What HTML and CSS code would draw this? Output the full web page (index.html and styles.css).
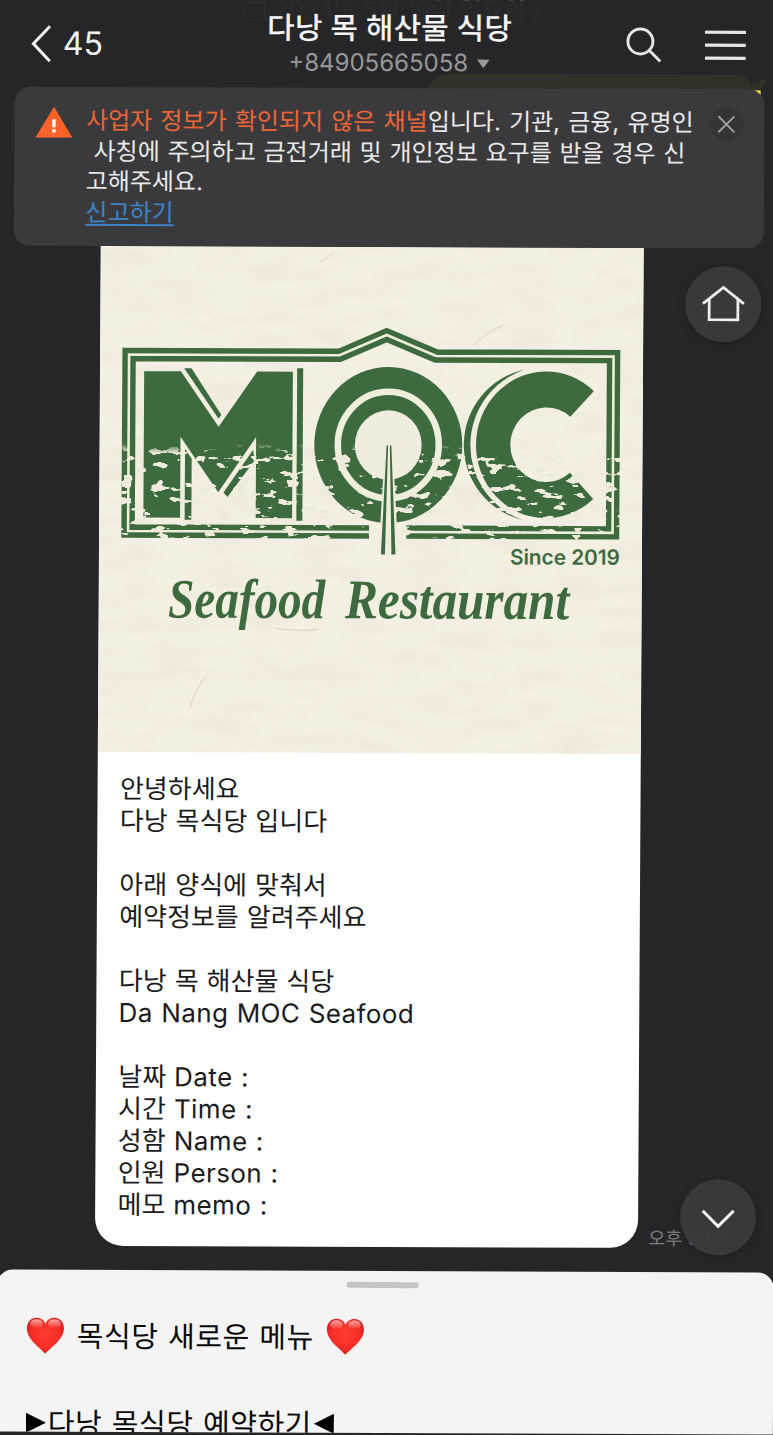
FILE: index.html
```
<!DOCTYPE html>
<html lang="ko">

<head>
    <meta charset="UTF-8">
    <meta name="viewport" content="width=device-width, initial-scale=1.0">
    <title>다낭 목 해산물 식당</title>
    <link rel="stylesheet" href="styles.css">
</head>

<body>
    <div class="screen">
        <!-- content scrolled under the header -->
        <div class="scrolled">
            <div class="date">
                <svg width="22" height="20" viewBox="0 0 22 20" fill="none" stroke="#8e8e90" stroke-width="2">
                    <rect x="1" y="2" width="20" height="17" rx="2" />
                    <path d="M6 0v4M16 0v4M5 10h12M5 14h12" stroke-dasharray="2 2" />
                </svg>
                <span>2024년 5월 19일 일요일 ›</span>
            </div>
            <svg class="sent" width="342" height="60" viewBox="0 0 342 60">
                <path d="M0 60V24Q2 0 28 0H306Q320 1 326 9Q333 8 341 3Q339 11 335 15V24H326V60Z" fill="#fee43c" />
            </svg>
        </div>

        <header class="header">
            <div class="back">
                <svg width="21" height="38" viewBox="0 0 21 38" fill="none" stroke="#f2f2f2" stroke-width="3">
                    <path d="M19 1.5 2.5 19 19 36.5" />
                </svg>
                <span>45</span>
            </div>
            <div class="title">
                <h1>다낭 목 해산물 식당</h1>
                <div class="phone">
                    <span>+84905665058</span>
                    <svg width="13" height="9" viewBox="0 0 13 9"><path d="M0 0h13L6.500 9z" fill="#98989a" /></svg>
                </div>
            </div>
            <div class="tools">
                <svg width="36" height="36" viewBox="0 0 36 36" fill="none" stroke="#e6e6e6" stroke-width="2.900">
                    <circle cx="14.500" cy="14.500" r="12.500" />
                    <path d="M23.500 23.500 34.500 34.500" />
                </svg>
                <svg width="41" height="30" viewBox="0 0 41 30" stroke="#e6e6e6" stroke-width="3.200">
                    <path d="M0 2h41M0 15h41M0 28h41" />
                </svg>
            </div>
        </header>

        <section class="notice">
            <svg class="warn" width="37" height="31" viewBox="0 0 37 31">
                <path d="M18.500 0 37 31H0z" fill="#fd6229" />
                <path d="M16.800 12.500h3.400v8h-3.400zM16.800 22.500h3.400v3.200h-3.400z" fill="#fff" />
            </svg>
            <div class="notice-text">
                <p><em>사업자 정보가 확인되지 않은 채널</em>입니다. 기관, 금융, 유명인</p>
                <p class="tight"> 사칭에 주의하고 금전거래 및 개인정보 요구를 받을 경우 신</p>
                <p>고해주세요.</p>
                <p><a href="#">신고하기</a></p>
            </div>
            <div class="close">
                <svg width="18" height="18" viewBox="0 0 18 18" stroke="#a2a2a4" stroke-width="1.800">
                    <path d="M1 1 17 17M17 1 1 17" />
                </svg>
            </div>
        </section>

        <main class="chat">
            <article class="card">
                <svg class="banner" width="543" height="506" viewBox="98.500 247.500 543 506">
                    <defs>
                        <filter id="paper" x="0" y="0" width="100%" height="100%">
                            <feTurbulence type="fractalNoise" baseFrequency=".02 .06" numOctaves="5" seed="8" />
                            <feColorMatrix values="0 0 0 0 .66  0 0 0 0 .62  0 0 0 0 .54  .4 0 0 0 -.15" />
                        </filter>
                        <filter id="wear" x="0" y="0" width="100%" height="100%" color-interpolation-filters="sRGB">
                            <feTurbulence type="fractalNoise" baseFrequency=".06 .14" numOctaves="5" seed="23" />
                            <feColorMatrix values="0 0 0 0 .938  0 0 0 0 .922  0 0 0 0 .862  26 0 0 0 -16" />
                        </filter>
                        <linearGradient id="fade" x1="0" y1="0" x2="0" y2="1">
                            <stop offset="0" stop-color="#000" />
                            <stop offset=".1" stop-color="#fff" />
                        </linearGradient>
                        <mask id="lower"><rect x="118" y="445" width="503" height="96" fill="url(#fade)" /></mask>
                    </defs>
                    <rect x="98" y="247" width="544" height="507" fill="#f4f0e2" />
                    <rect x="98" y="247" width="544" height="507" filter="url(#paper)" />
                    <g fill="none" stroke="#b9b1a1" stroke-width=".8" opacity=".6">
                        <path d="M502 325Q480 335 472 346M190 710Q196 690 206 678M275 629Q300 633 318 630M318 263l14-10" />
                    </g>

                    <!-- frame -->
                    <g fill="none">
                        <path d="M368.500 532.500H127.500V356H338L385 335.500 434.500 356.300H612V532.500H405.700" stroke="#3d6b3f" stroke-width="13.400" />
                        <path d="M368.500 532.500H127.500V356H338L385 335.500 434.500 356.300H612V532.500H405.700" stroke="#eeefdb" stroke-width="2.600" />
                    </g>

                    <g fill="#3d6b3f">
                        <!-- M -->
                        <path d="M142.700 372.600H179.400L217.400 428 255.700 372.600H291.400V519H255V438L217.400 493.500 179.400 438V519H142.700Z" />
                        <path d="M182.700 369.500H190L220 415.800 217.400 420Z" />
                        <path d="M295.700 369H301.700V521.500H295.700Z" />
                        <path d="M184 450 190.700 460V521H184Z" />
                        <path d="M252 451 254 461 226.700 498 222.700 493.500Z" />
                        <!-- O -->
                        <ellipse cx="387.200" cy="445.500" rx="74" ry="78" />
                    </g>
                    <ellipse cx="387.200" cy="445.500" rx="50.500" ry="53.200" fill="none" stroke="#eef0dc" stroke-width="6.500" />
                    <ellipse cx="387.200" cy="445.500" rx="33.400" ry="34.700" fill="#f0ecde" />
                    <!-- C -->
                    <g fill="#3d6b3f">
                        <path d="M592.400 390.900A70 73.300 0 1 0 592.400 498.600L569 472.600A36 37.300 0 1 1 569 416.600Z" />
                        <path d="M523.400 369.500A77.200 77.200 0 0 0 522 520A79.700 79.700 0 0 1 523.400 369.500Z" />
                    </g>
                    <rect x="118" y="445" width="503" height="96" filter="url(#wear)" mask="url(#lower)" />
                    <!-- chopsticks -->
                    <path d="M384 446H391.500L398 555H378Z" fill="#f0ecde" />
                    <path d="M385.500 446H387L384.500 555H380.500ZM388.800 446H390.300L395 555H391Z" fill="#3d6b3f" />

                    <text class="since" x="509.500" y="564.500" textLength="110" lengthAdjust="spacingAndGlyphs">Since 2019</text>
                    <text class="script" x="168" y="619" textLength="157" lengthAdjust="spacingAndGlyphs">Seafood</text>
                    <text class="script" x="345" y="619" textLength="224" lengthAdjust="spacingAndGlyphs">Restaurant</text>
                </svg>
                <div class="message">
                    <p>안녕하세요</p>
                    <p>다낭 목식당 입니다</p>
                    <br>
                    <p>아래 양식에 맞춰서</p>
                    <p>예약정보를 알려주세요</p>
                    <br>
                    <p>다낭 목 해산물 식당</p>
                    <p class="latin">Da Nang MOC Seafood</p>
                    <br>
                    <p>날짜 <span class="latin">Date :</span></p>
                    <p>시간 <span class="latin">Time :</span></p>
                    <p>성함 <span class="latin">Name :</span></p>
                    <p>인원 <span class="latin">Person :</span></p>
                    <p>메모 <span class="latin">memo :</span></p>
                </div>
            </article>
            <time class="time">오후 5:17</time>
        </main>

        <div class="round home">
            <svg width="44" height="38" viewBox="0 0 44 38" fill="none" stroke="#eee" stroke-width="2.800">
                <path d="M1.500 18.500 22 2.200 42.500 18.500" />
                <path d="M7.800 14V34.500H36.500V14" />
            </svg>
        </div>
        <div class="round down">
            <svg width="34" height="20" viewBox="0 0 34 20" fill="none" stroke="#f4f4f4" stroke-width="3">
                <path d="M1.500 1.500 17 17 32.500 1.500" />
            </svg>
        </div>

        <section class="sheet">
            <div class="handle"></div>
            <div class="sheet-title">
                <svg width="38" height="38" viewBox="0 0 38 38">
                    <defs>
                        <radialGradient id="heart" cx=".5" cy=".45" r=".6">
                            <stop offset="0" stop-color="#fd3d33" />
                            <stop offset=".65" stop-color="#f72d25" />
                            <stop offset="1" stop-color="#c9191c" />
                        </radialGradient>
                        <linearGradient id="shine" x1="0" y1="0" x2="0" y2="1">
                            <stop offset="0" stop-color="#fff" stop-opacity=".6" />
                            <stop offset="1" stop-color="#fff" stop-opacity="0" />
                        </linearGradient>
                    </defs>
                    <path d="M19 37C13 30 .5 23 .5 11.500C.5 5 5 1 10 1C14.500 1 17.500 3.500 19 7C20.500 3.500 23.500 1 28 1C33 1 37.500 5 37.500 11.500C37.500 23 25 30 19 37Z" fill="url(#heart)" />
                    <ellipse cx="10" cy="7" rx="6.500" ry="4.500" fill="url(#shine)" />
                    <ellipse cx="28" cy="7" rx="6.500" ry="4.500" fill="url(#shine)" />
                </svg>
                <span>목식당 새로운 메뉴</span>
                <svg width="38" height="38" viewBox="0 0 38 38">
                    <path d="M19 37C13 30 .5 23 .5 11.500C.5 5 5 1 10 1C14.500 1 17.500 3.500 19 7C20.500 3.500 23.500 1 28 1C33 1 37.500 5 37.500 11.500C37.500 23 25 30 19 37Z" fill="url(#heart)" />
                    <ellipse cx="10" cy="7" rx="6.500" ry="4.500" fill="url(#shine)" />
                    <ellipse cx="28" cy="7" rx="6.500" ry="4.500" fill="url(#shine)" />
                </svg>
            </div>
            <div class="sheet-link">
                <svg width="20" height="20" viewBox="0 0 20 20"><path d="M0 0 20 10 0 20z" /></svg>
                <span>다낭 목식당 예약하기</span>
                <svg width="20" height="20" viewBox="0 0 20 20"><path d="M20 0 0 10 20 20z" /></svg>
            </div>
        </section>
    </div>
</body>

</html>
```
FILE: styles.css
```
* {
    box-sizing: border-box;
}

html {
    background-color: #262628;
}

body {
    margin: 0;
    width: 773px;
    height: 1435px;
    overflow: hidden;
    background-color: #262628;
    font-family: "Inter", "Noto Sans CJK KR", sans-serif;
}

p,
h1 {
    margin: 0;
}

svg {
    display: block;
    flex-shrink: 0;
}

/* the whole screen leans very slightly to the right */
.screen {
    position: relative;
    width: 773px;
    height: 1433px;
    transform: matrix(1, 0.0038, -0.0058, 1, 0, 0);
    transform-origin: 386px 717px;
}

.scrolled {
    position: absolute;
    top: 0;
    left: 0;
}

.date {
    position: absolute;
    top: -2px;
    left: 240px;
    display: flex;
    align-items: center;
    gap: 8px;
    color: #8e8e90;
    font-size: 24px;
    line-height: 26px;
    white-space: nowrap;
}

.sent {
    position: absolute;
    top: 73px;
    left: 422px;
}

.header {
    position: relative;
    display: flex;
    align-items: flex-start;
    height: 89px;
    padding: 0 30px 0 27px;
    background-color: rgba(38, 38, 40, 0.95);
}

.back {
    display: flex;
    align-items: center;
    gap: 11px;
    width: 180px;
    padding-top: 26px;
    color: #f2f2f2;
    font-size: 32px;
    line-height: 38px;
}

.title {
    flex: 1;
    padding: 10px 0 0 1px;
    text-align: center;
}

.title h1 {
    color: #f4f4f4;
    font-size: 30px;
    font-weight: 500;
    line-height: 36px;
    white-space: nowrap;
}

.phone {
    display: flex;
    justify-content: center;
    align-items: center;
    gap: 9px;
    padding-top: 2px;
    color: #98989a;
    font-size: 24px;
    line-height: 30px;
}

.tools {
    display: flex;
    justify-content: flex-end;
    align-items: center;
    gap: 43px;
    width: 180px;
    padding: 26px 1px 0 0;
}

.notice {
    position: relative;
    display: flex;
    width: 750px;
    height: 159px;
    margin: -1px 0 0 10.500px;
    padding: 20px 20px 0 21.500px;
    border-radius: 16px;
    background-color: #3a3a3c;
    color: #e9e9ea;
    font-size: 24px;
    line-height: 30.500px;
}

.notice-text {
    flex: 1;
    margin: -1px 0 0 13.500px;
    white-space: nowrap;
    word-spacing: 1.400px;
}

.notice-text p {
    white-space: pre;
}

.notice-text .tight {
    word-spacing: 1px;
}

.notice em {
    color: #ee6537;
    font-style: normal;
}

.notice a {
    color: #3f83c8;
    text-decoration: underline;
    text-underline-offset: 3px;
}

.close {
    display: flex;
    justify-content: center;
    align-items: center;
    width: 34px;
    height: 34px;
    margin: -2px 1px 0 -1px;
    border-radius: 50%;
    background-color: #343436;
}

.chat {
    display: flex;
    align-items: flex-end;
    gap: 10px;
    padding-left: 98.400px;
}

.card {
    width: 543px;
    height: 999.500px;
    border-radius: 0 0 28px 28px;
    background-color: #fff;
    overflow: hidden;
}

.since {
    fill: #3d6b3f;
    font-family: "Inter", sans-serif;
    font-size: 21px;
    font-weight: 600;
}

.script {
    fill: #3d6b3f;
    font-family: "Liberation Serif", serif;
    font-size: 56px;
    font-style: italic;
    font-weight: bold;
}

.message {
    padding: 21px 22px;
    color: #1c1c1e;
    font-size: 26px;
    line-height: 32px;
    word-spacing: 0.700px;
}

.latin {
    letter-spacing: 0.400px;
}

.time {
    margin-bottom: -1px;
    color: #7c7c7e;
    font-size: 18.500px;
    line-height: 22px;
    white-space: nowrap;
}

.round {
    position: absolute;
    display: flex;
    justify-content: center;
    align-items: center;
    width: 76px;
    height: 76px;
    border-radius: 50%;
    background-color: rgba(58, 58, 60, 0.95);
    box-shadow: 0 2px 8px rgba(0, 0, 0, 0.2);
}

.home {
    top: 264.500px;
    left: 683px;
}

.down {
    top: 1178px;
    left: 683px;
    padding-top: 4px;
}

.sheet {
    width: 777px;
    height: 162px;
    margin-top: 24.500px;
    border-radius: 16px 16px 0 0;
    background-color: #f4f4f4;
    color: #0a0a0a;
    font-size: 29px;
    letter-spacing: 0.500px;
    word-spacing: 1px;
    overflow: hidden;
}

.handle {
    width: 72px;
    height: 6px;
    margin: 11px auto 0 350px;
    border-radius: 3px;
    background-color: #c4c4c4;
}

.sheet-title {
    display: flex;
    align-items: center;
    gap: 12.500px;
    height: 44px;
    margin-top: 27px;
    padding-left: 30px;
}

.sheet-title span {
    margin-top: -4px;
}

.sheet-link {
    display: flex;
    align-items: center;
    gap: 2px;
    height: 44px;
    margin-top: 43px;
    padding-left: 30px;
}

.sheet-link span {
    margin-top: -5px;
}
```
